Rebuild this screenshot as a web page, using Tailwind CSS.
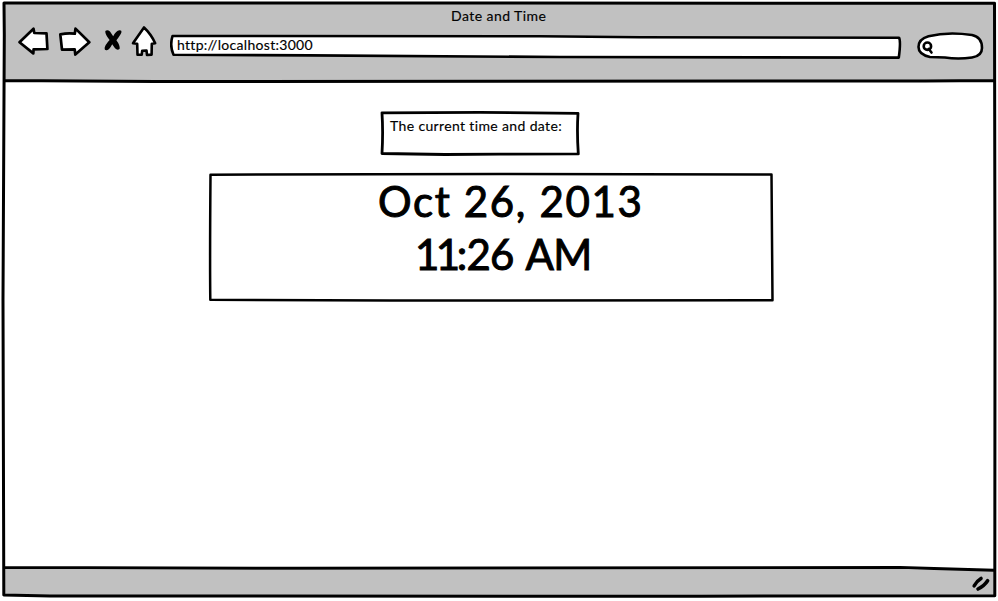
<!DOCTYPE html>
<html lang="en">
<head>
<meta charset="utf-8">
<title>Date and Time</title>
<script src="https://cdn.jsdelivr.net/npm/@tailwindcss/browser@4"></script>
</head>
<body class="bg-white overflow-hidden font-[Lato,sans-serif] text-black">
<div class="relative isolate w-[998px] h-[601px] flex flex-col pt-[3px] pb-[5px] pl-[4px] pr-[4px]">
  <header class="h-[78px] shrink-0 bg-[#c1c1c1] flex flex-col">
    <h1 class="h-[27px] pt-[3px] pl-[447px] text-[14px] leading-[20px] whitespace-nowrap"><span class="tracking-[0.45px] [-webkit-text-stroke:0.15px_black]">Date and Time</span></h1>
    <nav class="flex items-start pl-[13px]">
      <svg class="w-[34px] h-[30px] shrink-0 -mt-[4px]" viewBox="17 26 34 30" fill="white" stroke="black" stroke-width="2.7" stroke-linejoin="round"><path d="M19.5 42.2 L33.5 28.8 L34.3 33 L46.5 33.4 L47.4 49 L33.6 49.3 L33.3 53.4 Z"/></svg>
      <svg class="w-[34px] h-[30px] shrink-0 ml-[7px] -mt-[4px]" viewBox="58 26 34 30" fill="white" stroke="black" stroke-width="2.7" stroke-linejoin="round"><path d="M60.3 34.3 Q68 32.8 74.8 33.7 L75.5 28.6 L89.3 42.3 L75.3 54.5 L74.7 49.3 L62 49.6 Z"/></svg>
      <svg class="w-[20px] h-[26px] shrink-0 ml-[11px] -mt-[2px]" viewBox="103 28 20 26" stroke="none" fill="black"><path d="M105.3 31 Q107.5 29.5 110 31.5 L113.2 36.2 Q116 30.5 119.5 30.2 Q121.8 30 121.5 32 Q121 34.5 116.4 40.2 Q120 45 119.7 48.8 Q117.5 51 115 48.3 L112.2 44.2 Q109.5 49.6 106.8 50.2 Q104.3 50.5 104.6 48 Q105 45 109.6 40 Q105 34.5 105.3 31Z"/></svg>
      <svg class="w-[28px] h-[34px] shrink-0 ml-[7px] -mt-[6px]" viewBox="130 24 28 34" fill="white" stroke="black" stroke-width="2.6" stroke-linejoin="round"><path d="M144 27.5 L133 43.3 L137.2 43.8 L137.5 54.8 L141.7 54.8 L142.2 50.7 L146.5 50.5 L147 55 L151.6 54.6 L151.8 43.8 L155.2 43.3 Q151 34 144 27.5Z"/></svg>
      <div class="relative w-[732px] h-[25px] shrink-0 ml-[12px] mt-[4px]">
        <svg class="absolute inset-0 w-full h-full" viewBox="170 34 732 25" fill="white" stroke="black" stroke-width="2.6" stroke-linejoin="round"><path d="M172.5 36 L540 36.2 L640 37.3 L899 37.7 Q901 41 898.8 57.6 L560 57 L310 55.4 L173.5 54.8 Q169.5 46 172.5 36Z"/></svg>
        <span class="relative block pl-[7px] pt-[1px] text-[14px] leading-[20px] whitespace-nowrap tracking-[0.3px] [-webkit-text-stroke:0.15px_black]">http://localhost:3000</span>
      </div>
      <svg class="w-[70px] h-[32px] shrink-0 ml-[14px]" viewBox="916 30 70 32" fill="white" stroke="black" stroke-width="2.6" stroke-linecap="round"><path d="M928.5 36.2 Q948 31.5 972 35 Q982 37 982 48 Q982 56 972 57.5 Q958 59.5 945 57.5 L930 57 Q918.5 54.5 918.5 47 Q918.5 39 928.5 36.2Z"/><circle cx="927.4" cy="46.2" r="3.7"/><path d="M928.7 49 L931.5 52.5"/></svg>
    </nav>
  </header>
  <main class="flex-1 bg-white flex flex-col">
    <section class="relative w-[200px] h-[45px] ml-[376px] mt-[30px]">
      <svg class="absolute inset-0 w-full h-full" viewBox="380 111 200 45" fill="none" stroke="black" stroke-width="2.8" stroke-linejoin="round"><path d="M382 112.9 L480 112.4 L578 113.3 Q576.8 132 578.3 153.8 L500 154.2 L445 154.5 L382 153.5 Q383.2 132 382 112.9Z"/></svg>
      <p class="relative pl-[10px] pt-[5px] text-[14px] leading-[20px] whitespace-nowrap tracking-[0.36px] [-webkit-text-stroke:0.15px_black]">The current time and date:</p>
    </section>
    <section class="relative w-[566px] h-[130px] ml-[204px] mt-[16px]">
      <svg class="absolute inset-0 w-full h-full" viewBox="208 172 566 130" fill="none" stroke="black" stroke-width="2.5" stroke-linejoin="round"><path d="M210.5 174.7 L500 174.1 L771.5 174.6 L772.5 300.2 L390 300.5 L210.3 299.8 Q209.8 260 210.5 174.7Z"/></svg>
      <div class="relative pt-[3px] text-[42px] leading-[53px] whitespace-nowrap [-webkit-text-stroke:1px_black]">
        <p class="pl-[170px] tracking-[1.65px]">Oct 26, 2013</p>
        <p class="pl-[207px] tracking-[-0.8px]"><span class="tracking-[-3.5px]">11</span>:26 <span class="ml-[2px]">AM</span></p>
      </div>
    </section>
  </main>
  <footer class="h-[26px] shrink-0 bg-[#c1c1c1] flex justify-end pr-[3px] pt-[3px]">
    <svg class="w-[20px] h-[20px]" viewBox="972 573 20 20" fill="none" stroke="black" stroke-width="3.6" stroke-linecap="round"><path d="M975.2 585.8 Q977.5 581.2 982 578.5 M979 589 Q985.5 585.5 988.6 580.7"/></svg>
  </footer>
  <svg class="absolute inset-0 w-[998px] h-[601px] pointer-events-none" viewBox="0 0 998 601" fill="none" stroke="black" stroke-width="3" stroke-linejoin="round"><path fill="white" stroke="none" d="M880 565 L994 565 L994 570 L935 568Z"/><path d="M4 3 L994.5 3.2 L995 300 L994.8 595.8 L700 596.2 L50 596 L3.8 595 L3 300 L4.3 35 Z M4 80.5 L155 81.5 L925 81 L994 80.5 M4 567.5 L300 568.3 L900 567.5 L994 570.3"/></svg>
</div>
</body>
</html>
